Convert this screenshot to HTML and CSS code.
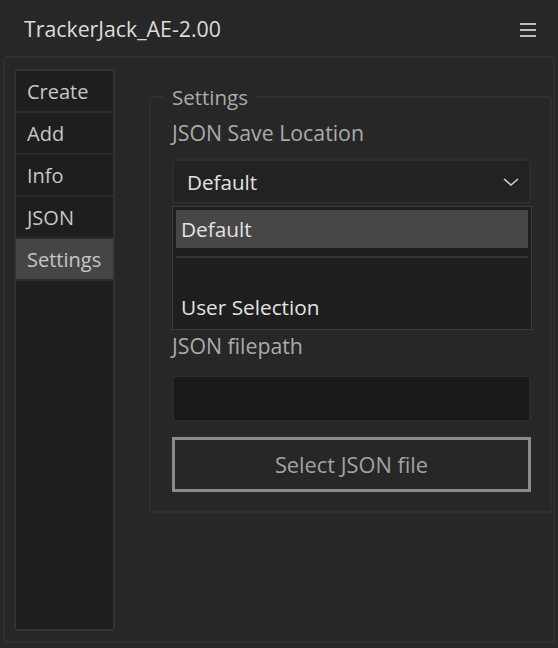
FILE: index.html
```html
<!DOCTYPE html>
<html lang="en">
<head>
<meta charset="utf-8">
<title>TrackerJack_AE-2.00</title>
<link rel="stylesheet" href="styles.css">
</head>
<body>
<div class="app">
  <header class="titlebar">
    <span class="title">TrackerJack_AE-2.00</span>
    <svg class="menu-icon" viewBox="0 0 16 16" aria-hidden="true">
      <line x1="0" y1="3" x2="16" y2="3"/>
      <line x1="0" y1="9" x2="16" y2="9"/>
      <line x1="0" y1="15" x2="16" y2="15"/>
    </svg>
  </header>
  <main class="panel">
    <nav class="sidebar">
      <div class="nav-item">Create</div>
      <div class="nav-item">Add</div>
      <div class="nav-item">Info</div>
      <div class="nav-item">JSON</div>
      <div class="nav-item active">Settings</div>
    </nav>
    <fieldset class="settings">
      <legend class="settings-legend">Settings</legend>
      <label class="field-label">JSON Save Location</label>
      <div class="select">
        <span>Default</span>
        <svg class="chevron" viewBox="0 0 16 8" aria-hidden="true">
          <polyline points="1,1 8,7 15,1"/>
        </svg>
      </div>
      <ul class="menu">
        <li class="menu-item active">Default</li>
        <li class="menu-divider"></li>
        <li class="menu-blank"></li>
        <li class="menu-item">User Selection</li>
      </ul>
      <label class="field-label field-label--path">JSON filepath</label>
      <div class="text-input"></div>
      <button class="btn">Select JSON file</button>
    </fieldset>
  </main>
</div>
</body>
</html>
```

FILE: styles.css
```css
html, body {
  margin: 0;
  padding: 0;
}
body {
  background: #272727;
  font-family: "Open Sans", "Noto Sans", sans-serif;
  height: 648px;
  overflow: hidden;
}
.app {
  display: flex;
  flex-direction: column;
  height: 648px;
}
.titlebar {
  height: 56px;
  flex: none;
  display: flex;
  align-items: center;
  justify-content: space-between;
  padding: 0 22px 0 24px;
  box-sizing: border-box;
}
.title {
  font-size: 21.3px;
  color: #dcdcdc;
}
.menu-icon {
  width: 16px;
  height: 16px;
  margin-top: 1px;
  stroke: #bdbdbd;
  stroke-width: 2;
}
.panel {
  flex: none;
  height: 587px;
  box-sizing: border-box;
  margin: 0 3px;
  border: 2px solid #303030;
  border-radius: 4px;
  padding: 11px 1px 10px 9px;
  display: flex;
  align-items: flex-start;
  gap: 34px;
}
.sidebar {
  width: 101px;
  flex: none;
  align-self: stretch;
  box-sizing: border-box;
  border: 2px solid #323232;
  border-radius: 4px;
  background: #1e1e1e;
}
.nav-item {
  height: 40px;
  border-bottom: 2px solid #2b2b2b;
  padding-left: 11px;
  display: flex;
  align-items: center;
  font-size: 20px;
  color: #c6c6c6;
}
.nav-item.active {
  background: #454545;
}
.settings {
  flex: 1;
  min-width: 0;
  margin: 14px 0 0;
  border: 2px solid #2f2f2f;
  border-radius: 4px;
  padding: 8px 19px 19px 21px;
}
.settings-legend {
  font-size: 20.5px;
  line-height: 28px;
  color: #ababab;
  padding: 0 9px;
  margin-left: -9px;
}
.field-label {
  display: block;
  font-size: 21.3px;
  line-height: 28px;
  color: #ababab;
  margin-bottom: 12px;
}
.field-label--path {
  margin-bottom: 15px;
}
.select {
  height: 45px;
  box-sizing: border-box;
  border: 2px solid #2c2c2c;
  border-radius: 4px;
  background: #222222;
  display: flex;
  align-items: center;
  justify-content: space-between;
  padding: 0 10px 0 13px;
  font-size: 20.6px;
  color: #e2e2e2;
}
.chevron {
  width: 16px;
  height: 8px;
  fill: none;
  stroke: #cfcfcf;
  stroke-width: 1.6;
}
.menu {
  list-style: none;
  margin: 2px -1px 2px 0;
  padding: 3px;
  border: 1px solid #3a3a3a;
  background: #1e1e1e;
}
.menu-item {
  height: 38px;
  display: flex;
  align-items: center;
  padding-left: 5px;
  font-size: 20.8px;
  color: #e2e2e2;
}
.menu-item.active {
  background: #474747;
}
.menu-divider {
  height: 2px;
  background: #343434;
  margin: 8px 0;
}
.menu-blank {
  height: 22px;
}
.text-input {
  height: 47px;
  box-sizing: border-box;
  border: 2px solid #2b2b2b;
  border-radius: 4px;
  background: #191919;
  margin-bottom: 15px;
}
.btn {
  display: block;
  width: 100%;
  height: 55px;
  box-sizing: border-box;
  border: 3px solid #8a8a8a;
  border-radius: 0;
  background: transparent;
  color: #a2a2a2;
  font-family: inherit;
  font-size: 21.8px;
}
```
